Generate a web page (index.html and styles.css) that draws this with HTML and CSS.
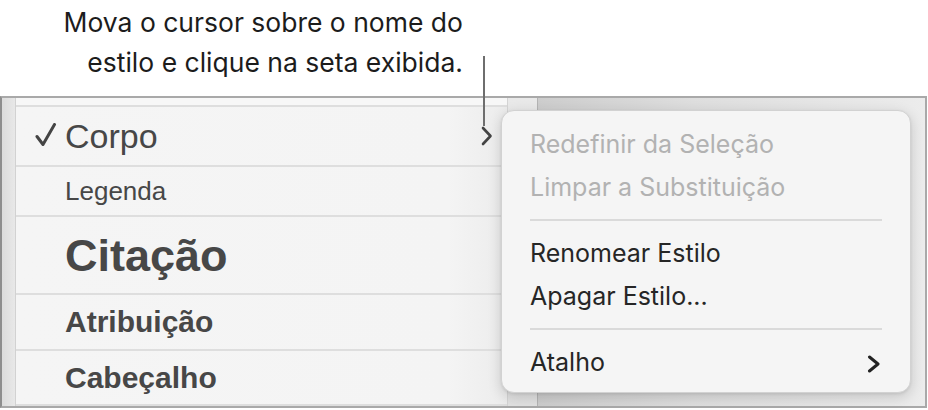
FILE: index.html
```html
<!DOCTYPE html>
<html lang="pt">
<head>
<meta charset="utf-8">
<title>Estilos</title>
<link rel="stylesheet" href="styles.css">
</head>
<body>
<div class="page">
  <div class="caption">
    <p class="caption-text">Mova o cursor sobre o nome do<br>estilo e clique na seta exibida.</p>
    <span class="callout-line"></span>
  </div>
  <div class="frame">
    <div class="gutter"></div>
    <div class="list">
      <div class="row-top"></div>
      <div class="row row-corpo">
        <span class="mark">
          <svg width="22" height="24" viewBox="0 0 22 24"><path d="M2 13.5 L8 21.5 L19.5 1.5" fill="none" stroke="#444" stroke-width="3" stroke-linecap="round" stroke-linejoin="round"/></svg>
        </span>
        <span class="name name-corpo">Corpo</span>
        <span class="row-chev">
          <svg width="12" height="20" viewBox="0 0 12 20"><path d="M2 2 L9.5 10 L2 18" fill="none" stroke="#444" stroke-width="2.6" stroke-linecap="round" stroke-linejoin="round"/></svg>
        </span>
      </div>
      <div class="row row-legenda"><span class="mark"></span><span class="name name-legenda">Legenda</span></div>
      <div class="row row-citacao"><span class="mark"></span><span class="name name-citacao">Citação</span></div>
      <div class="row row-atrib"><span class="mark"></span><span class="name name-bold">Atribuição</span></div>
      <div class="row row-cab"><span class="mark"></span><span class="name name-bold">Cabeçalho</span></div>
      <div class="row-end"></div>
    </div>
    <div class="strip"></div>
    <div class="canvas"></div>
  </div>
  <div class="menu">
    <div class="item disabled">Redefinir da Seleção</div>
    <div class="item disabled">Limpar a Substituição</div>
    <div class="sep"></div>
    <div class="item">Renomear Estilo</div>
    <div class="item">Apagar Estilo...</div>
    <div class="sep"></div>
    <div class="item item-sub">
      <span>Atalho</span>
      <svg class="sub-chev" width="14" height="18" viewBox="0 0 14 18"><path d="M2.5 2 L11 9 L2.5 16" fill="none" stroke="#222" stroke-width="3" stroke-linecap="round" stroke-linejoin="round"/></svg>
    </div>
  </div>
</div>
</body>
</html>
```

FILE: styles.css
```css
html, body {
  margin: 0;
  padding: 0;
  background: #ffffff;
}

.page {
  position: relative;
  width: 928px;
  height: 410px;
  overflow: hidden;
}

.caption {
  height: 96px;
  box-sizing: border-box;
  padding-top: 2px;
  padding-right: 465px;
  text-align: right;
}

.caption-text {
  margin: 0;
  font-family: Inter, "Noto Sans", sans-serif;
  font-size: 26.5px;
  line-height: 40px;
  color: #1c1c1c;
}

.callout-line {
  position: absolute;
  left: 483px;
  top: 56px;
  width: 2px;
  height: 70px;
  background: #6e6e6e;
  z-index: 2;
}

.frame {
  display: flex;
  width: 927px;
  height: 312px;
  box-sizing: border-box;
  border: 2px solid #a9a9a9;
  border-left-color: #8e8e8e;
  background: #f2f2f2;
}

.gutter {
  width: 14px;
  flex: none;
  box-sizing: border-box;
  background: linear-gradient(to right, #dcdcdc, #e8e8e8);
  border-right: 1px solid #d2d2d2;
}

.list {
  width: 491px;
  flex: none;
  display: flex;
  flex-direction: column;
  background: linear-gradient(to right, #f5f5f5 0%, #f4f4f4 88%, #ececec 100%);
}

.row-top {
  height: 7px;
  flex: none;
  background: #f7f7f7;
}

.row {
  display: flex;
  align-items: center;
  flex: none;
  box-sizing: border-box;
  border-top: 2px solid #dedede;
  padding-left: 19px;
  color: #474747;
  font-family: "Liberation Sans", Arial, sans-serif;
  line-height: 1;
}

.row-corpo { height: 60px; }
.row-legenda { height: 50px; }
.row-citacao { height: 78px; }
.row-atrib { height: 56px; }
.row-cab { height: 55px; }

.row-end {
  flex: 1;
  border-top: 2px solid #dedede;
}

.mark {
  width: 30px;
  flex: none;
  display: flex;
  align-items: center;
}

.mark svg {
  display: block;
  margin-top: -2px;
}

.name-corpo { font-size: 34px; }
.name-legenda { font-size: 26px; }
.name-citacao { font-size: 45px; font-weight: bold; }
.name-bold { font-size: 30px; font-weight: bold; }

.row-chev {
  margin-left: auto;
  margin-right: 14px;
  display: flex;
}

.row-chev svg { display: block; }

.strip {
  width: 31px;
  flex: none;
  box-sizing: border-box;
  border-left: 1px solid #d4d4d4;
  border-right: 1px solid #b4b4b4;
  background: linear-gradient(to bottom, #e9e9e9, #e1e1e1);
}

.canvas {
  flex: 1;
  background: linear-gradient(to right, #cdcdcd 0%, #dedede 40%, #ececec 100%);
}

.menu {
  position: absolute;
  left: 501px;
  top: 110px;
  width: 410px;
  height: 283px;
  box-sizing: border-box;
  padding: 12px 0 0;
  background: #f5f5f5;
  border: 1px solid #d2d2d2;
  border-radius: 13px;
  box-shadow: 0 4px 14px rgba(0, 0, 0, 0.16), 0 1px 3px rgba(0, 0, 0, 0.08);
  font-family: Inter, "Noto Sans", sans-serif;
  font-size: 25px;
  color: #262626;
}

.item {
  height: 43px;
  line-height: 43px;
  padding: 0 29px 0 28px;
  white-space: nowrap;
}

.disabled { color: #b2b2b2; }

.sep {
  height: 2px;
  margin: 10px 28px 11px 28px;
  background: #dadada;
}

.item-sub {
  display: flex;
  align-items: center;
  justify-content: space-between;
  padding-right: 29px;
}

.sub-chev { display: block; margin-top: 2px; }
```
